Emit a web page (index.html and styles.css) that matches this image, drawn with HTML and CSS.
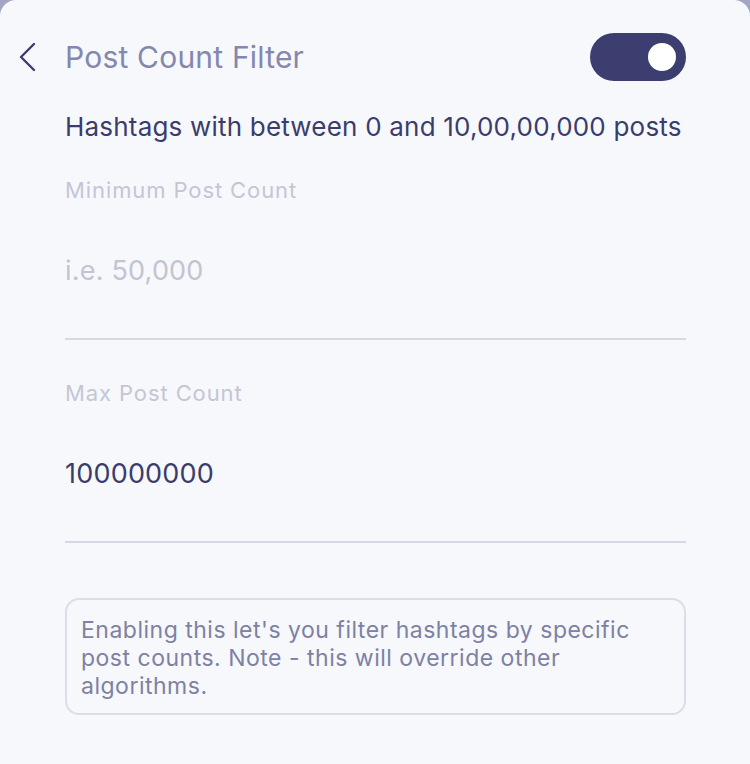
FILE: index.html
```html
<!DOCTYPE html>
<html>
<head>
<meta charset="utf-8">
<link rel="stylesheet" href="styles.css">
</head>
<body>
<div class="panel">
  <div class="header">
    <div class="back">
      <svg width="18" height="30" viewBox="0 0 18 30"><path d="M16 2 L3 15 L16 28" fill="none" stroke="#3b3e6e" stroke-width="2.4" stroke-linecap="round" stroke-linejoin="round"/></svg>
    </div>
    <div class="title">Post Count Filter</div>
    <div class="toggle"><div class="knob"></div></div>
  </div>
  <div class="subtitle">Hashtags with between 0 and 10,00,00,000 posts</div>
  <div class="field first">
    <div class="label">Minimum Post Count</div>
    <div class="value placeholder">i.e. 50,000</div>
  </div>
  <div class="field">
    <div class="label">Max Post Count</div>
    <div class="value">100000000</div>
  </div>
  <div class="note">Enabling this let's you filter hashtags by specific post counts. Note - this will override other algorithms.</div>
</div>
</body>
</html>
```

FILE: styles.css
```css
html, body {
  margin: 0;
  padding: 0;
  background: #a3a5c2;
  width: 750px;
  height: 764px;
  overflow: hidden;
  font-family: Inter, "Noto Sans", sans-serif;
}
.panel {
  background: #f7f8fc;
  height: 764px;
  box-sizing: border-box;
  padding: 33px 64px 0 65px;
  border-radius: 16px 16px 0 0;
}
.header {
  display: flex;
  align-items: center;
  height: 48px;
  margin-left: -47px;
}
.back {
  width: 47px;
  display: flex;
  align-items: center;
}
.title {
  flex: 1;
  font-size: 30px;
  color: #8487ae;
  letter-spacing: 0.2px;
}
.toggle {
  width: 96px;
  height: 48px;
  border-radius: 24px;
  background: #3b3e6e;
  display: flex;
  align-items: center;
  justify-content: flex-end;
  padding-right: 10px;
  box-sizing: border-box;
}
.knob {
  width: 28px;
  height: 28px;
  border-radius: 50%;
  background: #ffffff;
}
.subtitle {
  margin-top: 31px;
  font-size: 26px;
  line-height: 30px;
  color: #3a3d6c;
  letter-spacing: 0.2px;
}
.field {
  margin-top: 39px;
  border-bottom: 2px solid #d7d8e3;
}
.field.first {
  margin-top: 34px;
}
.label {
  font-size: 22px;
  line-height: 28px;
  color: #c4c6d6;
  letter-spacing: 0.9px;
}
.value {
  margin-top: 50px;
  padding-bottom: 50px;
  font-size: 27px;
  line-height: 34px;
  color: #3a3d6c;
  letter-spacing: 0.2px;
}
.value.placeholder {
  color: #c2c4d0;
}
.note {
  margin-top: 55px;
  border: 2px solid #dcdde7;
  border-radius: 14px;
  padding: 16px 30px 13px 14px;
  font-size: 23px;
  line-height: 28px;
  color: #7d81a3;
  letter-spacing: 0.5px;
}
```
